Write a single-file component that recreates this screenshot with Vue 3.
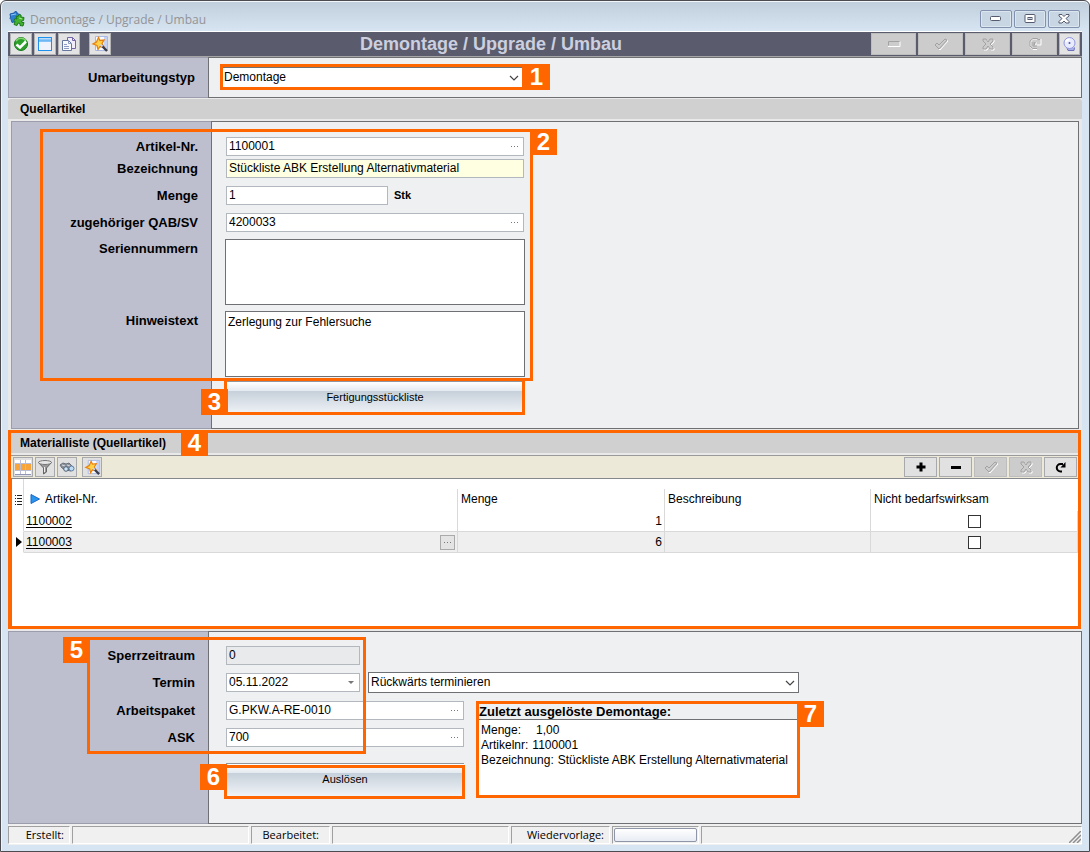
<script setup>
import { ref } from 'vue'

const title = 'Demontage / Upgrade / Umbau'
const typ = ref('Demontage')
const richtung = ref('Rückwärts terminieren')
const source = ref({
  artikel: '1100001',
  bezeichnung: 'Stückliste ABK Erstellung Alternativmaterial',
  menge: '1',
  auftrag: '4200033',
  serien: '',
  hinweis: 'Zerlegung zur Fehlersuche',
})
const plan = ref({ sperrzeit: '0', termin: '05.11.2022', paket: 'G.PKW.A-RE-0010', ask: '700' })
const rows = ref([
  { artikel: '1100002', menge: 1, text: '', frei: false, active: false },
  { artikel: '1100003', menge: 6, text: '', frei: false, active: true },
])
</script>

<template>
  <div class="window">
    <svg class="sprite" aria-hidden="true">
      <symbol id="wand" viewBox="0 0 18 18">
        <path d="M4.500 1.500h12v14h-12z" fill="#f8faff" stroke="#a9b9e4" />
        <path d="M13 2h3v13h-3z" fill="#c5d2f4" />
        <path d="M7.500 2.500l1.500 3 4-.500-2 3.500 2 3.500-4-.500-2 3-1-4-4-1.500 3.500-2z" fill="#ffd24a" stroke="#e8820e" stroke-width="1.300" />
        <path d="M10 10l6 6" stroke="#3b3d4a" stroke-width="2.400" />
        <path d="M9.500 9.500l2 2" stroke="#d4d6de" stroke-width="2" />
      </symbol>
      <symbol id="check" viewBox="0 0 16 14">
        <path d="M2 8l2-2 2 2 6-6 2 1-8 9z" fill="none" stroke="#fff" transform="translate(1 1)" />
        <path d="M2 8l2-2 2 2 6-6 2 1-8 9z" fill="#ccc" stroke="#a2a2a2" />
      </symbol>
      <symbol id="cross" viewBox="0 0 16 14">
        <path d="M3 2h3l2 3 2-3h3v2l-3 3 3 3v2h-3L8 9l-2 3H3v-2l3-3-3-3z" fill="none" stroke="#fff" transform="translate(1 1)" />
        <path d="M3 2h3l2 3 2-3h3v2l-3 3 3 3v2h-3L8 9l-2 3H3v-2l3-3-3-3z" fill="#ccc" stroke="#a2a2a2" />
      </symbol>
      <symbol id="chevron" viewBox="0 0 10 6">
        <path d="M1 1l4 4 4-4" fill="none" stroke="#444" stroke-width="1.200" />
      </symbol>
    </svg>

    <header class="titlebar">
      <svg class="app-icon" width="16" height="16" viewBox="0 0 16 16">
        <path d="M1 3l4-1 1-1.500 2 .5v1.500l3 1-1 3 1 1-1 2-7 2-1-3-1-1 .5-1.500z" fill="#2e7fd0" stroke="#1c5ba6" />
        <path d="M2 4l5-1" stroke="#8cc4f4" />
        <path d="M7 5l2 .5 1-2 2 .5v2l3 .5-.5 3-2 .5.5 1.500 2 0-1 3.500-3-.5v-2l-2-.5-1 2.500-3-1 1-3-1-1 1-2 2 .5z" fill="#43b02f" stroke="#1e7a1c" />
        <path d="M10 7l3 1" stroke="#a5e68e" />
      </svg>
      <span class="caption">{{ title }}</span>
      <div class="win-buttons">
        <button type="button" aria-label="Minimieren">
          <svg width="12" height="6" viewBox="0 0 12 6"><rect x=".5" y=".5" width="10" height="4" rx="1" fill="#fff" stroke="#555a6e" /></svg>
        </button>
        <button type="button" aria-label="Maximieren">
          <svg width="12" height="10" viewBox="0 0 12 10"><rect x="1" y=".5" width="10" height="8" rx="1" fill="#fff" stroke="#555a6e" /><rect x="4" y="3.500" width="4" height="2" fill="#c5d2df" stroke="#555a6e" /></svg>
        </button>
        <button type="button" aria-label="Schließen">
          <svg width="12" height="10" viewBox="0 0 12 10"><path d="M1 .5h3l2 2 2-2h3v1.500L8 4.500l3 3V9H8L6 7 4 9H1V7.500l3-3L1 2z" fill="#fff" stroke="#555a6e" /></svg>
        </button>
      </div>
    </header>

    <main class="client">
      <div class="toolbar">
        <div class="tools">
          <button type="button" aria-label="Bestätigen">
            <svg width="16" height="16" viewBox="0 0 16 16"><circle cx="8" cy="8" r="6.500" fill="#2da02c" stroke="#157718" /><path d="M3 5a6 6 0 0 1 10 0" fill="none" stroke="#86d573" stroke-width="1.500" /><path d="M3.500 8.500L7 11.500l6-6" fill="none" stroke="#fff" stroke-width="2.600" /></svg>
          </button>
          <button type="button" aria-label="Fenster">
            <svg width="16" height="16" viewBox="0 0 16 16"><rect x="1.500" y="1.500" width="13" height="13" fill="#eef2fd" stroke="#1e90ee" /><path d="M2 3.500h12" stroke="#8fc8f8" stroke-width="2" /><path d="M1 5h14" stroke="#1e90ee" /></svg>
          </button>
          <button type="button" aria-label="Kopieren">
            <svg width="16" height="16" viewBox="0 0 16 16"><path d="M6.500 1.500h5l3 3v8h-8z" fill="#f1edfb" stroke="#7466a6" /><path d="M11.500 1.500v3h3" fill="none" stroke="#7466a6" /><path d="M1.500 4.500h6l3 3v7h-9z" fill="#f8f9fd" stroke="#66769d" /><path d="M7.500 4.500v3h3M3 8.500h3M3 10.500h5M3 12.500h5" fill="none" stroke="#8b9bc4" /></svg>
          </button>
          <button type="button" class="apart" aria-label="Assistent"><svg width="18" height="18"><use href="#wand" /></svg></button>
        </div>
        <h1>{{ title }}</h1>
        <div class="actions">
          <button type="button" disabled aria-label="Löschen">
            <svg width="14" height="8" viewBox="0 0 14 8"><path d="M1 6.500h12v-5" fill="none" stroke="#fff" /><path d="M1.500 5.500v-4h11" fill="none" stroke="#a2a2a2" /></svg>
          </button>
          <button type="button" disabled aria-label="Speichern"><svg width="16" height="14"><use href="#check" /></svg></button>
          <button type="button" disabled aria-label="Verwerfen"><svg width="16" height="14"><use href="#cross" /></svg></button>
          <button type="button" disabled aria-label="Aktualisieren">
            <svg width="14" height="14" viewBox="0 0 14 14"><path d="M9 12.500H5L2.500 10V5L5 2h4M13 2v6H7V6h2" fill="none" stroke="#fff" /><path d="M9 11.500H4.500L2 9V4l3-2.500h4L11 3l1-1M6.500 8V5.500L8 6M5 5v4h4" fill="none" stroke="#a2a2a2" /></svg>
          </button>
          <button type="button" class="gong" aria-label="Hinweis">
            <svg width="15" height="16" viewBox="0 0 15 16"><path d="M5 12l1 2.500h6l.5-3" fill="#aab0ea" stroke="#6c72ba" /><circle cx="7.500" cy="7" r="5.500" fill="#e9ebff" stroke="#9197dc" /><path d="M4 6A3.500 3.500 0 0 1 7.500 3.500" fill="none" stroke="#fff" stroke-width="2" /><circle cx="7.500" cy="7" r="1" fill="#5258a5" /></svg>
          </button>
        </div>
      </div>

      <section class="panel type-panel">
        <div class="labels"><label for="typ">Umarbeitungstyp</label></div>
        <div class="fields">
          <div class="combo typ-combo">
            <select id="typ" v-model="typ"><option>Demontage</option><option>Upgrade</option><option>Umbau</option></select>
            <svg width="10" height="6"><use href="#chevron" /></svg>
          </div>
        </div>
        <div class="mark m1"><b>1</b></div>
      </section>

      <h2>Quellartikel</h2>
      <div class="inset">
        <section class="panel source-panel">
          <div class="labels">
            <label for="artikel">Artikel-Nr.</label>
            <label for="bez">Bezeichnung</label>
            <label for="menge">Menge</label>
            <label for="qab">zugehöriger QAB/SV</label>
            <label for="serien">Seriennummern</label>
            <label for="hinweis">Hinweistext</label>
          </div>
          <div class="fields">
            <div class="pick"><input id="artikel" v-model="source.artikel" type="text" /><button type="button" aria-label="Artikel wählen"></button></div>
            <input id="bez" v-model="source.bezeichnung" class="info" type="text" readonly />
            <div class="amount"><input id="menge" v-model="source.menge" type="text" /><span>Stk</span></div>
            <div class="pick"><input id="qab" v-model="source.auftrag" type="text" /><button type="button" aria-label="Auftrag wählen"></button></div>
            <textarea id="serien" v-model="source.serien"></textarea>
            <textarea id="hinweis" v-model="source.hinweis"></textarea>
            <button type="button" class="push">Fertigungsstückliste</button>
          </div>
          <div class="mark m2"><b>2</b></div>
          <div class="mark m3"><b>3</b></div>
        </section>
      </div>

      <section class="materials">
        <h2>Materialliste (Quellartikel)</h2>
        <div class="grid-tools">
          <button type="button" aria-label="Ansicht">
            <svg width="18" height="16" viewBox="0 0 18 16"><path d="M1 1h16v14H1z" fill="#fff" /><path d="M1 5h16v6H1z" fill="#f7a53a" /><path d="M1 4.500h16M1 11.500h16M6.500 1v14M11.500 1v14" stroke="#b9bdd6" /><path d="M1 15.500h16" stroke="#9094b5" /></svg>
          </button>
          <button type="button" aria-label="Filter">
            <svg width="16" height="16" viewBox="0 0 16 16"><path d="M1.500 3.500L6.500 9v6l3-2V9l5-5.500z" fill="#9a9a9a" stroke="#666" /><ellipse cx="8" cy="3.500" rx="6.500" ry="2" fill="#e6e6e6" stroke="#777" /><path d="M7.500 8v5" stroke="#eee" /></svg>
          </button>
          <button type="button" aria-label="Suchen">
            <svg width="16" height="14" viewBox="0 0 16 14"><path d="M1 5l3-2 3 1 3-1 5 5-3 3-5-1-4-2z" fill="#8c929c" stroke="#6a6f79" /><path d="M3 5l3 1M8 5l3 1" stroke="#d5d8de" /><circle cx="7" cy="9" r="2.300" fill="#cfe6f8" stroke="#4f5f74" /><circle cx="12.500" cy="8.500" r="2.500" fill="#bcdcf5" stroke="#5f7fa4" /></svg>
          </button>
          <button type="button" class="apart" aria-label="Assistent"><svg width="17" height="17"><use href="#wand" /></svg></button>
          <div class="row-actions">
            <button type="button" aria-label="Zeile hinzufügen"><svg width="10" height="10" viewBox="0 0 10 10"><path d="M5 .5v9M.5 5h9" stroke="#000" stroke-width="3" /></svg></button>
            <button type="button" aria-label="Zeile entfernen"><svg width="10" height="10" viewBox="0 0 10 10"><path d="M0 5.500h10" stroke="#000" stroke-width="3" /></svg></button>
            <button type="button" disabled aria-label="Speichern"><svg width="16" height="14"><use href="#check" /></svg></button>
            <button type="button" disabled aria-label="Verwerfen"><svg width="16" height="14"><use href="#cross" /></svg></button>
            <button type="button" aria-label="Neu laden"><svg width="12" height="12" viewBox="0 0 12 12"><path d="M7 10.500H5.500A3.500 3.500 0 0 1 5.500 3H8" fill="none" stroke="#000" stroke-width="2" /><path d="M10.500 1v5.500H5.500z" fill="#000" /></svg></button>
          </div>
        </div>
        <div class="grid-area">
          <table>
            <thead>
              <tr>
                <th class="ind"><svg width="8" height="10" viewBox="0 0 8 10"><path d="M2 .5h5M2 3.500h5M2 6.500h5M2 9.500h5M0 .5h1M0 3.500h1M0 6.500h1M0 9.500h1" stroke="#222" /></svg></th>
                <th class="first"><svg width="10" height="10" viewBox="0 0 10 10"><path d="M1 .5L9.500 5 1 9.500z" fill="#2b95ee" stroke="#1769c4" /></svg>Artikel-Nr.</th>
                <th class="mid">Menge</th>
                <th class="mid slim">Beschreibung</th>
                <th class="mid">Nicht bedarfswirksam</th>
              </tr>
            </thead>
            <tbody>
              <tr v-for="r in rows" :key="r.artikel" :class="{ active: r.active }">
                <td class="ind"><svg v-if="r.active" width="6" height="10" viewBox="0 0 6 10"><path d="M0 0l6 5-6 5z" /></svg></td>
                <td><div class="cell"><a href="#">{{ r.artikel }}</a><button v-if="r.active" type="button" class="dots" aria-label="Artikel wählen"></button></div></td>
                <td class="num">{{ r.menge }}</td>
                <td>{{ r.text }}</td>
                <td class="tick"><input v-model="r.frei" type="checkbox" :aria-label="'Nicht bedarfswirksam ' + r.artikel" /></td>
              </tr>
            </tbody>
          </table>
        </div>
        <div class="mark m4"><b>4</b></div>
      </section>

      <section class="panel plan-panel">
        <div class="labels">
          <label for="sperr">Sperrzeitraum</label>
          <label for="termin">Termin</label>
          <label for="paket">Arbeitspaket</label>
          <label for="ask">ASK</label>
        </div>
        <div class="fields">
          <input id="sperr" v-model="plan.sperrzeit" class="locked" type="text" readonly />
          <div class="line">
            <div class="pick date"><input id="termin" v-model="plan.termin" type="text" /><button type="button" class="drop" aria-label="Kalender"></button></div>
            <div class="combo direction">
              <select v-model="richtung" aria-label="Terminierung"><option>Rückwärts terminieren</option><option>Vorwärts terminieren</option></select>
              <svg width="10" height="6"><use href="#chevron" /></svg>
            </div>
          </div>
          <div class="lower">
            <div class="stack">
              <div class="pick"><input id="paket" v-model="plan.paket" type="text" /><button type="button" aria-label="Arbeitspaket wählen"></button></div>
              <div class="pick"><input id="ask" v-model="plan.ask" type="text" /><button type="button" aria-label="ASK wählen"></button></div>
              <button type="button" class="push">Auslösen</button>
            </div>
            <div class="last">
              <h3>Zuletzt ausgelöste Demontage:</h3>
              <dl>
                <div><dt class="wide">Menge:</dt><dd>1,00</dd></div>
                <div><dt>Artikelnr:</dt><dd>1100001</dd></div>
                <div><dt>Bezeichnung:</dt><dd>Stückliste ABK Erstellung Alternativmaterial</dd></div>
              </dl>
              <div class="mark m7"><b>7</b></div>
            </div>
          </div>
        </div>
        <div class="mark m5"><b>5</b></div>
        <div class="mark m6"><b>6</b></div>
      </section>

      <footer>
        <span>Erstellt:</span><span></span><span class="edited">Bearbeitet:</span><span></span><span>Wiedervorlage:</span>
        <span class="holder"><button type="button" aria-label="Wiedervorlage"></button></span>
        <span class="rest"><svg width="12" height="12" viewBox="0 0 12 12"><path d="M0 12L12 0M4 12l8-8M8 12l4-4" stroke="#8e8e8e" stroke-width="1.500" /></svg></span>
      </footer>
    </main>
  </div>
</template>

<style>
body { margin: 0; }
</style>

<style scoped>
* { box-sizing: border-box; }
.window {
  min-height: 100vh;
  display: flex;
  flex-direction: column;
  padding: 1px 7px 6px;
  border: 1px solid #4b4b50;
  border-radius: 6px 6px 0 0;
  background: linear-gradient(#c0cedb, #d7e4f1 30px);
  box-shadow: inset 0 1px #f2f6fa, inset 1px 0 #eef4fa;
  font: 12px/19px "Liberation Sans", Arial, sans-serif;
  color: #000;
}
button, input, select, textarea { font: inherit; color: inherit; margin: 0; border-radius: 0; outline: none; }
button { padding: 0; display: flex; align-items: center; justify-content: center; }
h1, h2, h3, dl, dd { margin: 0; }
.sprite { position: absolute; width: 0; height: 0; }

.titlebar { height: 29px; display: flex; align-items: flex-start; gap: 5px; }
.app-icon { margin: 9px 0 0 1px; }
.caption { margin-top: 9px; font: 12px/18px "Open Sans", "Noto Sans", sans-serif; color: #929497; }
.win-buttons { margin: 8px 2px 0 auto; display: flex; gap: 2px; }
.win-buttons button { width: 32px; height: 18px; border: 1px solid #8291ad; border-radius: 2px; background: #c8d6e4; box-shadow: inset 0 0 0 1px #dbe6f1; }

.client { flex: 1; display: flex; flex-direction: column; border-top: 1px solid #fff; background: #e9e9e9; }
.toolbar { height: 25px; padding: 1px 2px; display: flex; background: #5a5c6d; border-bottom: 1px solid #a5a5a5; }
.tools, .actions { display: flex; gap: 2px; }
.toolbar button { width: 22px; height: 22px; border: 1px solid #b4b4b6; background: #e3e3e4; }
.toolbar .apart { margin-left: 7px; }
.toolbar .actions button { width: 45px; }
.toolbar .actions .gong { width: 21px; }
button:disabled { background: #ccc !important; border-color: #bdbdbd !important; }
h1 { flex: 1; text-align: center; font-size: 18px; line-height: 22px; color: #cccfdf; }

.panel { position: relative; display: flex; }
.labels, .fields { border: 1px solid #6f7073; }
.labels { width: 200px; flex: none; background: #bdbfcf; border-color: #9b9dad; border-right: 0; padding-right: 13px; display: grid; justify-items: end; align-content: start; font-size: 13px; font-weight: bold; }
.fields { flex: 1; background: #eff0f2; display: grid; justify-items: start; align-items: start; align-content: start; }
.type-panel .labels, .type-panel .fields { height: 41px; padding-top: 10px; }
.type-panel .fields { padding: 9px 0 0 14px; }
h2 { height: 22px; margin-top: 1px; padding-left: 12px; background: #d0d0d0; border-radius: 3px 3px 0 0; font-size: 12px; line-height: 20px; border-bottom: 2px solid #e9e9e9; }
.inset { padding: 0 3px 1px; }

.source-panel .labels, .source-panel .fields { grid-template-rows: 22px 27px 27px 26px 72px 70px 32px; padding-top: 15px; padding-bottom: 15px; }
.source-panel .fields { padding-left: 14px; }

input[type="text"] { width: 100%; height: 19px; padding: 0 2px; border: 1px solid #b3b7be; background: #fff; }
.pick { position: relative; width: 298px; height: 19px; }
.pick button { position: absolute; top: 1px; right: 1px; width: 17px; height: 17px; border: 0; background: #fff; }
.pick button::after, .dots::after { content: ""; width: 8px; height: 1px; background: repeating-linear-gradient(90deg, #777 0 1px, transparent 1px 3px); }
.pick .drop::after { width: 0; height: 0; border: 3px solid transparent; border-top-color: #777; border-bottom: 0; background: none; }
input.info { width: 298px; background: #ffffe1; }
.amount { display: flex; gap: 6px; font-weight: bold; font-size: 11px; }
.amount input { width: 162px; font-weight: normal; font-size: 12px; }
textarea { display: block; width: 300px; height: 66px; margin-left: -1px; padding: 1px 2px; border: 1px solid #6f7073; background: #fff; resize: none; }
.push { width: 298px; height: 34px; padding-bottom: 2px; border: 0; border-top: 1px solid #8f969e; background: linear-gradient(#fff, #e4eaf0 9px, #c6d0da 9px, #f2f5f8); font-size: 11px; }
.combo { position: relative; }
.combo select { display: block; width: 100%; height: 21px; padding: 0 1px; appearance: none; border: 1px solid #6f7073; background: #fff; }
.combo svg { position: absolute; right: 4px; top: 8px; pointer-events: none; }
.typ-combo { width: 300px; }
.combo #typ { padding: 0 1px; border-width: 1px 0; }

.mark { position: absolute; border: 3px solid #f60; pointer-events: none; }
.mark b { position: absolute; width: 27px; height: 26px; background: #f60; color: #fff; font-size: 24px; line-height: 26px; text-align: center; }
.m1 { left: 212px; top: 7px; width: 305px; height: 26px; }
.m1 b { right: -28px; top: -3px; }
.m2 { left: 29px; top: 8px; width: 493px; height: 252px; }
.m2 b, .m7 b { right: -27px; top: -3px; }
.m3 { left: 213px; top: 257px; width: 301px; height: 37px; }
.m3 b { left: -26px; bottom: -3px; }
.m4 { inset: 0; }
.m4 b { left: 170px; top: -3px; }
.m5 { left: 79px; top: 6px; width: 279px; height: 117px; }
.m5 b { left: -27px; top: -3px; }
.m6 { left: 216px; top: 134px; width: 241px; height: 34px; }
.m6 b { left: -27px; top: -4px; }
.m7 { inset: 0; }

.materials { position: relative; flex: 1; display: flex; flex-direction: column; margin-right: 1px; padding: 0 3px 2px; }
.materials h2 { height: 24px; padding: 2px 0 0 9px; border-radius: 0; }
.grid-tools { height: 24px; padding: 1px 1px 2px 2px; display: flex; gap: 2px; background: #ece9d8; border-top: 1px solid #9a9a9a; border-bottom: 1px solid #84878c; }
.grid-tools button { width: 20px; height: 20px; border: 1px solid #a8a9ad; background: #e1e1e2; }
.grid-tools .apart { margin-left: 3px; }
.row-actions { margin-left: auto; display: flex; gap: 2px; }
.grid-tools .row-actions button { width: 33px; }
.grid-area { flex: 1; background: #fff; border-left: 1px solid #84878c; }
table { width: 100%; table-layout: fixed; border-collapse: separate; border-spacing: 0; line-height: 20px; }
th { height: 32px; padding: 10px 3px 0; font-weight: normal; text-align: left; vertical-align: top; background: linear-gradient(#d9d9d9, #d9d9d9) 100% 10px / 1px 22px no-repeat; }
th:last-child { background: none; }
th.mid { width: 207px; }
th.slim { width: 206px; }
th.first { padding-left: 6px; }
th.first svg { margin-right: 5px; vertical-align: -1px; }
.ind { border-right: 1px solid #d9d9d9; }
th.ind { width: 12px; padding: 10px 0 0 3px; background: none; }
td { height: 21px; padding: 0 2px; border-right: 1px solid #d9d9d9; border-bottom: 1px solid #d9d9d9; }
td.ind { border-bottom-color: transparent; padding: 0 0 0 4px; }
.ind svg { vertical-align: middle; }
td.ind svg { display: block; }
.active td:not(.ind) { background: #efefef; }
.cell { display: flex; align-items: center; justify-content: space-between; }
a { color: #000; text-underline-offset: 2px; }
.dots { width: 15px; height: 15px; border: 1px solid #aaa; background: #e4e4e4; }
.num { text-align: right; }
.tick { text-align: center; }
.tick input { appearance: none; width: 13px; height: 13px; border: 1px solid #333; background: #fff; vertical-align: middle; display: inline-block; }

.plan-panel { margin-top: 2px; }
.plan-panel .labels, .plan-panel .fields { height: 193px; padding-top: 14px; }
.plan-panel .labels { grid-template-rows: 27px 28px 27px 19px; }
.plan-panel .fields { padding-left: 17px; grid-template-rows: 27px 28px auto; }
input.locked { width: 134px; background: #e9eaec; border-color: #b3b7be; }
.line { display: flex; gap: 8px; }
.line .date { width: 134px; }
.direction { width: 431px; margin-top: -1px; }
.direction select { padding-left: 2px; }
.lower { display: flex; gap: 12px; align-items: flex-start; }
.stack { width: 238px; display: flex; flex-direction: column; gap: 8px; }
.stack .pick { width: 238px; }
.stack .push { width: 238px; margin-top: 8px; }
.last { position: relative; width: 324px; height: 97px; padding: 3px; background: #fff; }
.last h3 { height: 16px; background: #eff0f2; border-bottom: 1px solid #6f7073; font-size: 13px; line-height: 15px; }
.last dl { padding: 3px 2px; line-height: 15px; white-space: nowrap; }
.last dl div { display: flex; gap: 4px; }
.last .wide { margin-right: 11px; }

footer { height: 21px; padding: 2px 0 1px; display: grid; grid-template-columns: 62px 177px 79px 177px 99px 87px 1fr; gap: 2px; background: #f0f0f0; font: 11px/16px "Open Sans", "Noto Sans", sans-serif; }
footer span { border: 1px solid #fff; border-top-color: #a0a0a0; border-left-color: #a0a0a0; text-align: right; padding-right: 5px; white-space: nowrap; }
footer .edited { padding-right: 10px; }
footer .holder { padding: 1px; }
footer button { width: 100%; height: 14px; border: 1px solid #8e96a8; border-radius: 2px; background: linear-gradient(#fff, #e8ecf3); }
footer .rest { display: flex; justify-content: flex-end; align-items: flex-end; padding: 0; }
</style>
